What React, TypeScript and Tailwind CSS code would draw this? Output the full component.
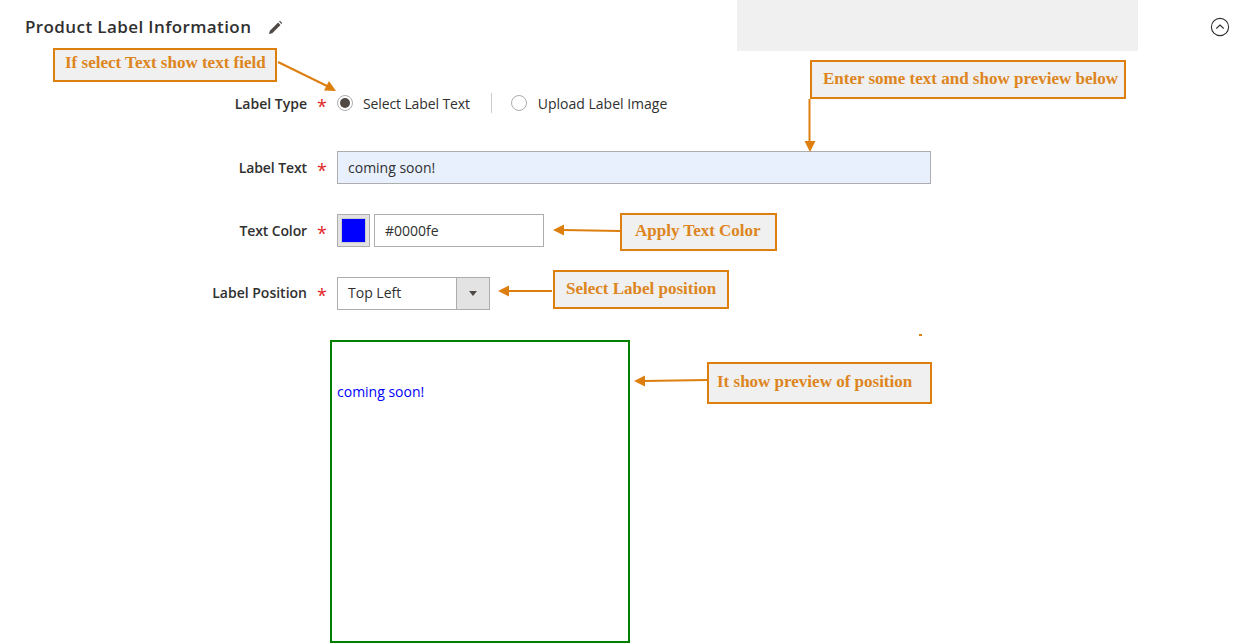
import React from 'react';

const calloutBase =
   "absolute z-10 flex items-center border-2 border-[#dc7f0e] bg-[#f0f0f0] font-['Liberation_Serif',serif] text-[17px] font-bold leading-none whitespace-nowrap text-[#dd8520]";

function Row({ label, className, labelClass = '', starClass = 'mt-[5px]', children }: { label: string; className: string; labelClass?: string; starClass?: string; children: React.ReactNode }) {
   return (
      <div className={`flex items-center ${className}`}>
         <label className={`w-[307px] text-right text-[14px] font-semibold text-[#303030] ${labelClass}`}>{label}</label>
         <span className={`ml-[10px] w-[20px] text-[18px] leading-none text-[#e22626] ${starClass}`}>*</span>
         {children}
      </div>
   );
}

function Arrows() {
   const c = '#dc7f0e';
   return (
      <svg className="absolute left-0 top-0 z-20 pointer-events-none" width="1244" height="644" fill="none">
         <path d="M278 62 L327 86" stroke={c} strokeWidth="2" />
         <path d="M336 91 L324 90.5 L329 81 Z" fill={c} />
         <path d="M809.5 99 V142" stroke={c} strokeWidth="2" />
         <path d="M810 152 L804.5 141 L815.5 141 Z" fill={c} />
         <path d="M563 230 L620 231" stroke={c} strokeWidth="2" />
         <path d="M553 230 L564 224.5 L564 235.5 Z" fill={c} />
         <path d="M508 291 H552" stroke={c} strokeWidth="2" />
         <path d="M498 291 L509 285.5 L509 296.5 Z" fill={c} />
         <path d="M644 381 L707 380" stroke={c} strokeWidth="2" />
         <path d="M634 381 L645 375.5 L645 386.5 Z" fill={c} />
         <path d="M919 335 H922" stroke={c} strokeWidth="2" />
      </svg>
   );
}

export default function App() {
   return (
      <div className="relative h-[644px] w-[1244px] overflow-hidden bg-white font-['Open_Sans',sans-serif] text-[14px] text-[#303030]">
         <div className="flex h-[54px] items-center pl-[25px] pr-[14px]">
            <h2 className="text-[17px] font-semibold tracking-[0.4px] text-[#303030]">Product Label Information</h2>
            <svg className="ml-[17px]" width="15" height="15" viewBox="0 0 16 16">
               <path d="M1 15 L2 11.5 L10.8 2.7 L13.3 5.2 L4.5 14 Z" fill="#514943" />
               <path d="M11.8 1.7 L12.8 0.9 L15.1 3.2 L14.3 4.2 Z" fill="#514943" />
            </svg>
            <svg className="ml-auto" width="20" height="20" viewBox="0 0 20 20" fill="none">
               <circle cx="10" cy="10" r="8.6" stroke="#303030" strokeWidth="1.1" />
               <path d="M6.3 11.5 L10 8 L13.7 11.5" stroke="#303030" strokeWidth="1.1" />
            </svg>
         </div>

         <div className="absolute right-[106px] top-0 h-[51px] w-[401px] bg-[#f0f0f0]" />

         <Row label="Label Type" className="mt-[34px] h-[30px]">
            <span className="flex h-[16px] w-[16px] items-center justify-center rounded-full border border-[#adadad] bg-white">
               <span className="h-[10px] w-[10px] rounded-full bg-[#514943]" />
            </span>
            <span className="ml-[10px] tracking-[-0.12px]">Select Label Text</span>
            <span className="ml-[21px] h-[20px] w-px bg-[#cccccc]" />
            <span className="ml-[19px] h-[16px] w-[16px] rounded-full border border-[#adadad] bg-white" />
            <span className="ml-[11px]">Upload Label Image</span>
         </Row>

         <Row label="Label Text" className="mt-[33px] h-[33px]" labelClass="tracking-[-0.1px]">
            <input
               readOnly
               value="coming soon!"
               className="h-[33px] w-[594px] border border-[#adadad] bg-[#e8f0fe] px-[10px] text-[14px] text-[#303030] outline-none"
            />
         </Row>

         <Row label="Text Color" className="mt-[30px] h-[33px]" labelClass="tracking-[-0.12px]">
            <span className="flex h-[33px] w-[33px] items-center justify-center border border-[#adadad] bg-[#e3e3e3]">
               <span className="h-[25px] w-[25px] border border-[#cccccc] bg-[#0000ff]" />
            </span>
            <input
               readOnly
               value="#0000fe"
               className="ml-[4px] h-[33px] w-[170px] border border-[#adadad] bg-white px-[10px] text-[14px] text-[#303030] outline-none"
            />
         </Row>

         <Row label="Label Position" className="mt-[30px] h-[33px]" labelClass="pb-[2px]" starClass="mt-[3px]">
            <div className="flex h-[33px] w-[153px] items-center border border-[#adadad] bg-white">
               <span className="flex-1 pb-[2px] pl-[10px]">Top Left</span>
               <span className="flex h-full w-[33px] items-center justify-center border-l border-[#adadad] bg-[#e3e3e3]">
                  <span className="h-0 w-0 border-x-[4px] border-t-[5px] border-x-transparent border-t-[#514943]" />
               </span>
            </div>
         </Row>

         <div className="ml-[330px] mt-[30px] h-[303px] w-[300px] border-2 border-[#008000] pl-[5px] pt-[39px]">
            <span className="text-[14px] leading-[19px] text-[#0000fe]">coming soon!</span>
         </div>

         <div className={`${calloutBase} left-[53px] top-[48px] h-[34px] w-[224px] pb-[5px] pl-[10px]`}>If select Text show text field</div>
         <div className={`${calloutBase} left-[810px] top-[60px] h-[39px] w-[316px] pb-[3px] pl-[11px]`}>Enter some text and show preview below</div>
         <div className={`${calloutBase} left-[620px] top-[213px] h-[38px] w-[157px] pb-[3px] pl-[13px]`}>Apply Text Color</div>
         <div className={`${calloutBase} left-[553px] top-[270px] h-[39px] w-[176px] pb-[3px] pl-[11px]`}>Select Label position</div>
         <div className={`${calloutBase} left-[707px] top-[362px] h-[42px] w-[225px] pb-[3px] pl-[8px]`}>It show preview of position</div>

         <Arrows />
      </div>
   );
}
